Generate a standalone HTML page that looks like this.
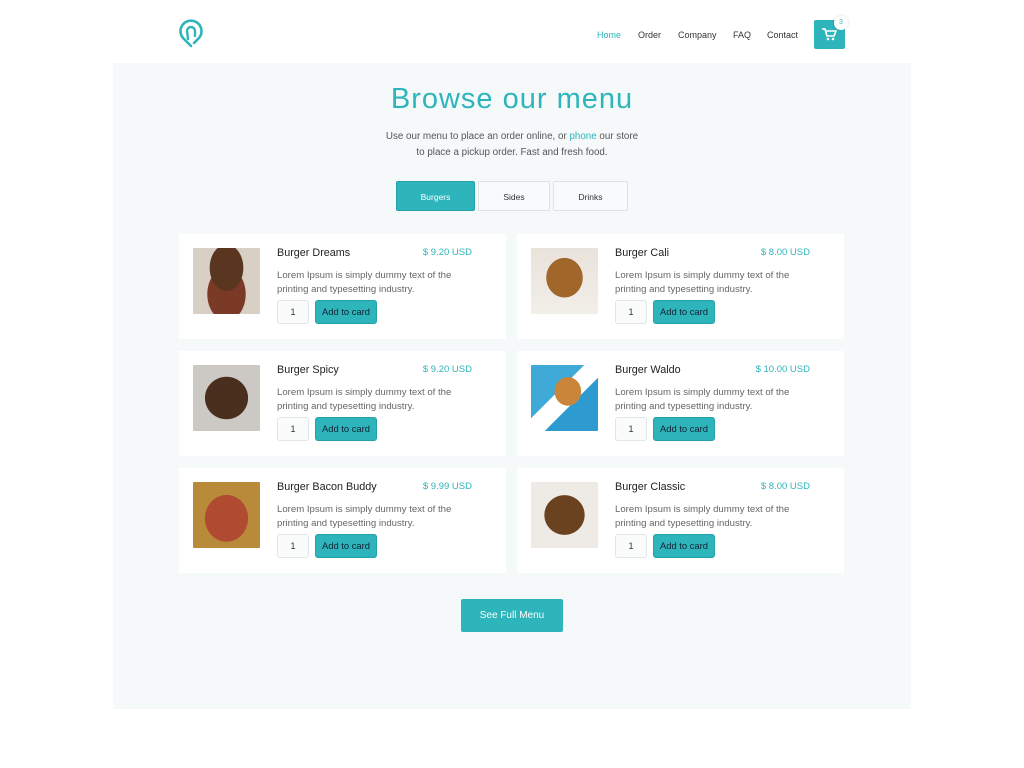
<!DOCTYPE html>
<html><head><meta charset="utf-8"><style>
*{margin:0;padding:0;box-sizing:border-box}
body{width:1024px;height:768px;background:#fff;font-family:"Liberation Sans",sans-serif;position:relative;overflow:hidden;color:#333}
.nav a{position:absolute;top:30px;font-size:9px;color:#333;text-decoration:none}
.cart{position:absolute;left:814px;top:20px;width:31px;height:29px;background:#2db5bb;border-radius:2px}
.badge{position:absolute;left:834px;top:16px;width:14px;height:14px;border-radius:50%;background:#fff;font-size:7px;color:#2db5bb;text-align:center;line-height:14px;box-shadow:0 0 3px rgba(0,0,0,.15)}
.panel{position:absolute;left:113px;top:63px;width:798px;height:646px;background:#f5f9fa}
h1{position:absolute;top:83px;width:1024px;text-align:center;font-weight:400;font-size:29px;color:#2db5bb;letter-spacing:1px}
.sub{position:absolute;top:129px;width:1024px;text-align:center;font-size:9.8px;line-height:15.5px;color:#555}
.tab{position:absolute;top:181px;height:30px;font-size:8.5px;text-align:center;line-height:30px;border:1px solid #dde3e5;background:#f8fbfc;border-radius:2px}
.card{position:absolute;width:327px;height:105px;background:#fff}
.img{position:absolute;left:14px;top:14px;width:67px;height:66px;border-radius:1px}
.t{position:absolute;left:98px;top:13px;font-size:10.8px;color:#222}
.p{position:absolute;right:34px;top:13px;font-size:9.5px;color:#2db5bb}
.d{position:absolute;left:98px;top:35px;font-size:9.6px;line-height:13.5px;color:#666;width:192px}
.q{position:absolute;left:98px;top:66px;width:32px;height:24px;border:1px solid #e2e6e8;border-radius:3px;font-size:9px;text-align:center;line-height:22px;background:#fafbfb}
.b{position:absolute;left:136px;top:66px;width:62px;height:24px;background:#2db5bb;border:1px solid #23a1a7;border-radius:3px;font-size:9.4px;text-align:center;line-height:22px;color:#123}
.full{position:absolute;left:461px;top:599px;width:102px;height:33px;background:#2db5bb;border-radius:2px;color:#fff;font-size:10px;text-align:center;line-height:33px}
</style></head><body>
<svg style="position:absolute;left:178px;top:18px" width="26" height="30" viewBox="0 0 26 30"><path d="M13 28 L5.5 20.5 A10.5 10.5 0 1 1 20.5 20.5 L16 25" fill="none" stroke="#2db5bb" stroke-width="2.6" stroke-linejoin="round" stroke-linecap="round"/><path d="M10 21 L9 13 A4 4 0 0 1 17 13 L17 18" fill="none" stroke="#2db5bb" stroke-width="2.4" stroke-linecap="round"/></svg>
<div class="nav"><a style="left:597px;color:#2db5bb">Home</a><a style="left:638px">Order</a><a style="left:678px">Company</a><a style="left:733px">FAQ</a><a style="left:767px">Contact</a></div>
<div class="cart"><svg style="position:absolute;left:8px;top:8px" width="15" height="13" viewBox="0 0 15 13"><path d="M0 1h3l2 7h7l2-5H4" fill="none" stroke="#fff" stroke-width="1.6"/><circle cx="6" cy="11" r="1.3" fill="#fff"/><circle cx="11" cy="11" r="1.3" fill="#fff"/></svg></div>
<div class="badge">3</div>
<div class="panel"></div>
<h1>Browse our menu</h1>
<div class="sub">Use our menu to place an order online, or <span style="color:#2db5bb">phone</span> our store<br>to place a pickup order. Fast and fresh food.</div>
<div class="tab" style="left:396px;width:79px;background:#2db5bb;border-color:#23a1a7;color:#fff">Burgers</div>
<div class="tab" style="left:478px;width:72px">Sides</div>
<div class="tab" style="left:553px;width:75px">Drinks</div>

<div class="card" style="left:179px;top:234px"><div class="img" style="background:radial-gradient(ellipse at 50% 30%,#5a3520 0 35%,transparent 36%),radial-gradient(ellipse at 50% 70%,#7a3a25 0 40%,transparent 41%),#d8cfc5"></div><div class="t">Burger Dreams</div><div class="p">$ 9.20 USD</div><div class="d">Lorem Ipsum is simply dummy text of the printing and typesetting industry.</div><div class="q">1</div><div class="b">Add to card</div></div>
<div class="card" style="left:517px;top:234px"><div class="img" style="background:radial-gradient(ellipse at 50% 45%,#a0662a 0 38%,transparent 39%),linear-gradient(#e8e2da,#f2efe9)"></div><div class="t">Burger Cali</div><div class="p">$ 8.00 USD</div><div class="d">Lorem Ipsum is simply dummy text of the printing and typesetting industry.</div><div class="q">1</div><div class="b">Add to card</div></div>
<div class="card" style="left:179px;top:351px"><div class="img" style="background:radial-gradient(ellipse at 50% 50%,#4a2e1e 0 45%,transparent 46%),#ccc8c4"></div><div class="t">Burger Spicy</div><div class="p">$ 9.20 USD</div><div class="d">Lorem Ipsum is simply dummy text of the printing and typesetting industry.</div><div class="q">1</div><div class="b">Add to card</div></div>
<div class="card" style="left:517px;top:351px"><div class="img" style="background:radial-gradient(ellipse at 55% 40%,#c9863a 0 25%,transparent 26%),linear-gradient(135deg,#3fa9d8 0 40%,#fff 40% 60%,#2e9bd0 60%)"></div><div class="t">Burger Waldo</div><div class="p">$ 10.00 USD</div><div class="d">Lorem Ipsum is simply dummy text of the printing and typesetting industry.</div><div class="q">1</div><div class="b">Add to card</div></div>
<div class="card" style="left:179px;top:468px"><div class="img" style="background:radial-gradient(ellipse at 50% 55%,#b04a30 0 45%,transparent 46%),#b88a3a"></div><div class="t">Burger Bacon Buddy</div><div class="p">$ 9.99 USD</div><div class="d">Lorem Ipsum is simply dummy text of the printing and typesetting industry.</div><div class="q">1</div><div class="b">Add to card</div></div>
<div class="card" style="left:517px;top:468px"><div class="img" style="background:radial-gradient(ellipse at 50% 50%,#6a4220 0 42%,transparent 43%),#eeeae6"></div><div class="t">Burger Classic</div><div class="p">$ 8.00 USD</div><div class="d">Lorem Ipsum is simply dummy text of the printing and typesetting industry.</div><div class="q">1</div><div class="b">Add to card</div></div>
<div class="full">See Full Menu</div>
</body></html>
